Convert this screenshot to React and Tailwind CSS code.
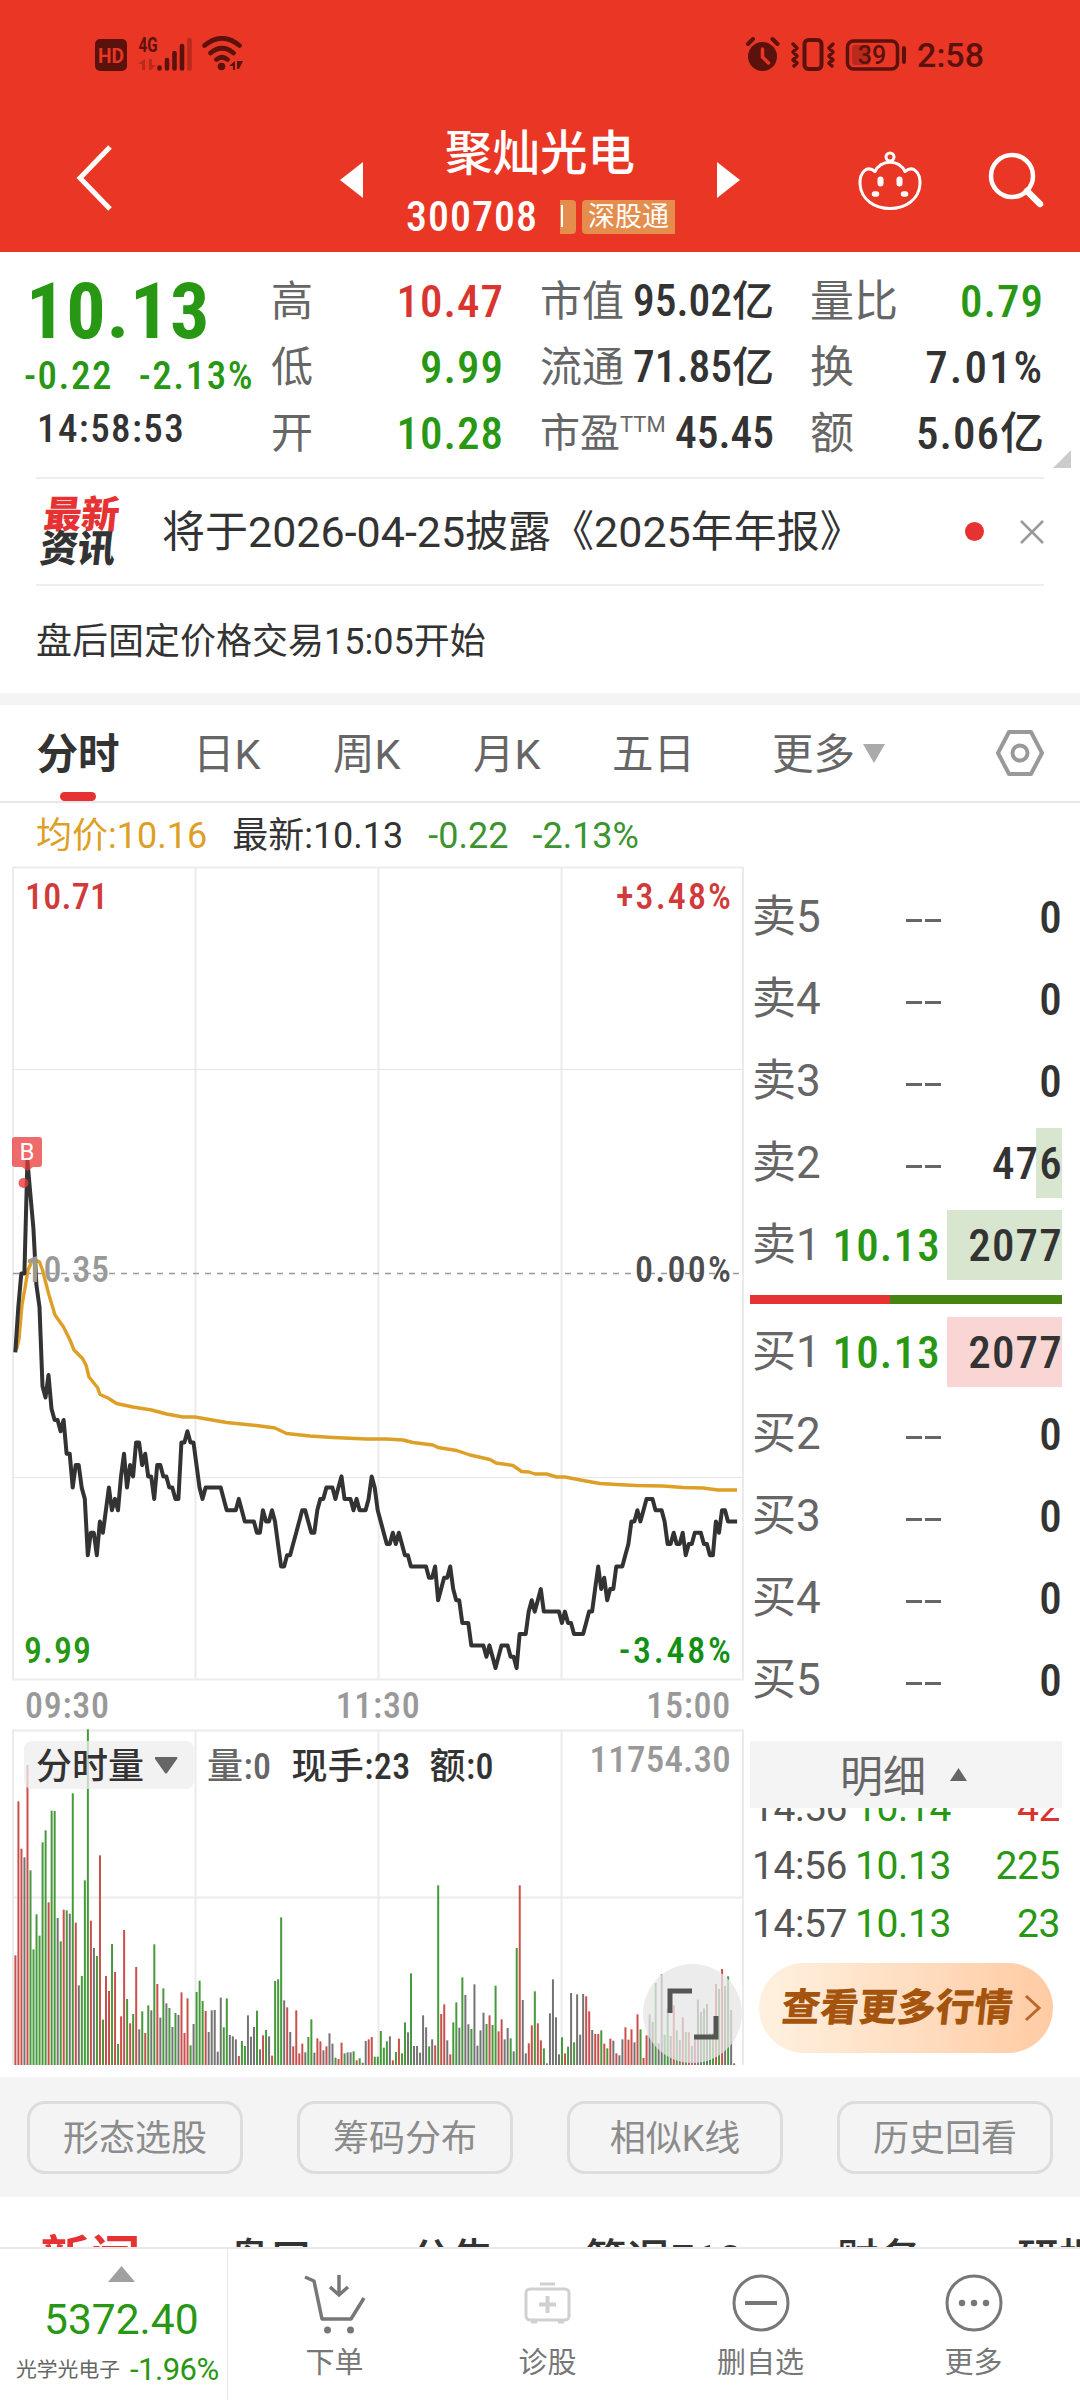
import { Fragment } from 'react'

const UP = 'text-[#d9342f]'
const DOWN = 'text-[#289714]'
const DARK = 'text-[#333333]'

// minute closes, in cents away from yesterday's 10.35
const PRECIOS = [
  -7, -3, 0, 0, 10, 7, 4, -1, -3, -10, -11, -9, -12, -13, -13, -14, -13, -16, -16, -19,
  -17, -17, -19, -20, -25, -23, -23, -25, -22, -23, -21, -19, -21, -20, -21, -18, -16, -19, -17, -18,
  -15, -15, -17, -16, -18, -18, -20, -17, -17, -18, -18, -19, -19, -20, -20, -15, -15, -14, -15, -15,
  -17, -19, -20, -19, -19, -19, -19, -19, -19, -20, -21, -21, -21, -21, -20, -21, -22, -22, -22, -22,
  -23, -23, -21, -22, -22, -21, -22, -24, -26, -26, -25, -25, -24, -23, -22, -21, -21, -22, -23, -23,
  -21, -20, -20, -19, -19, -19, -20, -19, -18, -20, -20, -20, -21, -20, -21, -21, -21, -20, -18, -19,
  -21, -22, -23, -24, -24, -23, -24, -23, -24, -25, -25, -26, -26, -26, -26, -26, -26, -27, -27, -26,
  -29, -28, -27, -27, -26, -28, -29, -29, -31, -31, -31, -33, -33, -33, -33, -33, -34, -33, -34, -35,
  -34, -33, -33, -33, -34, -34, -35, -32, -32, -32, -30, -29, -30, -29, -28, -30, -30, -30, -30, -30,
  -30, -31, -30, -31, -31, -32, -32, -32, -32, -31, -30, -30, -28, -26, -28, -27, -29, -28, -28, -26,
  -26, -26, -25, -24, -22, -22, -21, -22, -21, -20, -20, -20, -21, -21, -21, -22, -24, -24, -23, -24,
  -24, -23, -25, -24, -24, -23, -23, -23, -24, -24, -25, -25, -22, -23, -21, -21, -22, -22, -22, -22,
]

const MEDIA =
  '15,484 17,482 19,473 22,439 25,422 28,404 32,395 35,393.5 39.5,396 42.5,404 48.7,428 55,449 63.5,461 69.5,473 74,484 82.5,492.5 86,499 89,511 97.5,521.5 100,528.5 108,532 116.5,537.5 133,541 151.5,544 166.5,548 183,551 195,551 226.5,556.5 256.5,559.5 275,562 286.5,567.5 310,570 333,571.5 366.5,573 386,573 403,574 413,576.5 433,579 438,581.5 456.6,584.5 470,589 490,593.5 496,597 513,599.5 521.6,605.5 529,606 535,608 546.6,608 556.6,611 565,611 583,614.5 600,617.5 616.6,618.5 636.6,619.5 663,620 683,621.5 703,622 718,624 737,624'

// one bar per minute: colour + distance from the top of the panel (thirds of a px)
const VOLUMEN = `r766 r304 r446 k472 r195 g511 g748 g643 g707 g427 g391 r607 g332 g333 k654 g724 r629 g631 k641 g280
r668 k856 g828 g541 g88 r662 k744 g768 r466 g959 r828 r873 g732 r816 g1032 r949 r690 g897 r970 g942
r801 k988 g934 r999 g916 k931 g733 r852 k953 g865 k910 g924 k981 g939 k945 r877 r999 r895 g1036 k972
g876 g842 g903 r933 k996 k931 k930 k1055 k893 g982 g895 k1005 k1009 k1018 r1068 g1023 g1038 k946 k1010 k981
g932 k1048 r1006 g990 k1009 r1067 g843 g838 g652 k901 r922 k996 r1039 r931 r1060 r1031 k1057 g1011 g958 k1058
r1015 r1024 k1051 r1039 k1000 k1031 g1073 r1077 r1028 g1060 k1057 k1057 g1054 r1081 g1075 k1088 k1023 r1018 r1011 g1070
g1070 g993 g1043 g1024 k1009 r1081 g1056 r1016 g1060 g967 k997 g820 k1038 k1038 k1058 k946 k982 g1039 k1018 r1036
g556 r942 r913 k1021 r1063 g967 g907 k983 g832 k885 k973 g987 k853 k1037 k991 k938 g972 r946 g975 g857
r994 r958 k1018 k984 g1015 k1054 g744 r556 k900 k1060 r1030 r976 g874 r970 r1021 g1045 k1090 k940 k838 k952
k1063 g1012 r1060 g1040 k879 g1027 k883 k1004 k882 r889 r934 k990 r1002 r1002 g991 r1031 g1045 r1016 k1022 r1060
k1066 k1018 r982 r1019 r988 k1027 r943 g988 r1074 r1006 k943 k966 g849 k1030 k823 g1004 g925 k1008 r916 g991
k1020 r952 g996 r997 k1038 r1018 k899 k936 g925 k912 g1000 g1000 r852 g867 r807 k858 g829 k930 k1090`.split(/\s+/)

const BAR_COLORS = { r: '#c9504c', g: '#479a3c', k: '#747474' }

const VENTAS = [
  { label: '卖5', price: '--', vol: '0', w: 0 },
  { label: '卖4', price: '--', vol: '0', w: 0 },
  { label: '卖3', price: '--', vol: '0', w: 0 },
  { label: '卖2', price: '--', vol: '476', w: 26 },
  { label: '卖1', price: '10.13', vol: '2077', w: 115 },
]

const COMPRAS = [
  { label: '买1', price: '10.13', vol: '2077', w: 115 },
  { label: '买2', price: '--', vol: '0', w: 0 },
  { label: '买3', price: '--', vol: '0', w: 0 },
  { label: '买4', price: '--', vol: '0', w: 0 },
  { label: '买5', price: '--', vol: '0', w: 0 },
]

const TICKS = [
  { time: '14:56', price: '10.14', vol: '42', color: UP },
  { time: '14:56', price: '10.13', vol: '225', color: DOWN },
  { time: '14:57', price: '10.13', vol: '23', color: DOWN },
]

function StatusBar() {
  return (
    <div className="flex h-[108px] items-start justify-between pl-[95px] pr-[96px] pt-[36px] text-[#5c120c]">
      <svg width="150" height="36" viewBox="0 0 150 36" fill="none">
        <rect x="0" y="3" width="32" height="32" rx="5" fill="#5c120c" />
        <text x="16" y="26.5" textAnchor="middle" fontSize="20" fontWeight="700" fill="#e93625" textLength="26" lengthAdjust="spacingAndGlyphs" className="font-['Roboto']">HD</text>
        <text x="43.5" y="16" fontSize="20" fontWeight="700" fill="#5c120c" textLength="19" lengthAdjust="spacingAndGlyphs" className="font-['Roboto']">4G</text>
        <path d="M50 23v11h-3v-6h-4zM54 23v11h2l5-5h-4v-6z" fill="#b92a1c" />
        <path d="M64.500 31.500v1M72 24v8.500M79.500 17v15.500M87 10v22.500" stroke="#5c120c" strokeWidth="4.600" strokeLinecap="round" />
        <path d="M94.500 4v28.500" stroke="#b92a1c" strokeWidth="4.600" strokeLinecap="round" />
        <path d="M109.500 9.500Q127 -5 144.500 9.500M115.500 17Q127 7.500 138.500 17M121.500 23.500Q127 19 132.500 23.500" stroke="#5c120c" strokeWidth="4.600" strokeLinecap="round" />
        <circle cx="126.500" cy="30.500" r="3.800" fill="#5c120c" />
        <path d="M140 25v9h-2v-4h-4zM142 25h6l-4 8h-2z" fill="#5c120c" />
      </svg>
      <div className="flex items-start">
        <svg width="162" height="36" viewBox="0 0 162 36" fill="none" stroke="#5c120c">
          <circle cx="17.500" cy="20.500" r="14.500" fill="#5c120c" stroke="none" />
          <path d="M3 8l5-5M27.500 3l5 5" strokeWidth="4" strokeLinecap="round" />
          <path d="M17.500 13v8l6 6" stroke="#e93625" strokeWidth="3.500" strokeLinecap="round" />
          <rect x="59.500" y="4" width="17" height="29" rx="4" strokeWidth="4" />
          <path d="M48 8l4 4-4 4 4 4-4 4 4 3-3 3M88 8l-4 4 4 4-4 4 4 4-4 3 3 3" strokeWidth="3.500" strokeLinecap="round" strokeLinejoin="round" />
          <rect x="102.500" y="5" width="50" height="28" rx="6" strokeWidth="3.500" />
          <rect x="107" y="9" width="18" height="20" rx="3" fill="#b92a1c" stroke="none" />
          <path d="M159 12v14" strokeWidth="4" strokeLinecap="round" />
          <text x="127" y="27.500" textAnchor="middle" fontSize="25" stroke="none" fill="#5c120c" className="font-['Roboto'] font-medium">39</text>
        </svg>
        <span className="ml-[10px] mt-[1px] text-[34px] font-medium leading-[37px]">2:58</span>
      </div>
    </div>
  )
}

function Header() {
  return (
    <header className="h-[252px] bg-[#e93625] text-white">
      <StatusBar />
      <div className="flex h-[144px] items-start">
        <svg className="ml-[74px] mt-[36px]" width="42" height="68" viewBox="0 0 42 68" fill="none" stroke="#fff" strokeWidth="5">
          <path d="M36 3L6 34l30 31" />
        </svg>
        <svg className="ml-[224px] mt-[54px]" width="23" height="36" viewBox="0 0 23 36"><path d="M23 0v36L0 18z" fill="#fff" /></svg>
        <div className="flex w-[354px] flex-col items-center">
          <h1 className="mt-[19px] text-[47.500px] font-medium leading-[54px]">聚灿光电</h1>
          <div className="mt-[13px] flex w-full items-center pl-[43px]">
            <span className="w-[134px] text-[42px] font-medium leading-[46px] tracking-[1px] [font-stretch:85%]">300708</span>
            <span className="ml-[20px] flex h-[34px] w-[16px] items-center rounded-r bg-[#e48d4c] text-[24px] leading-none">
              <span className="mt-[-2px] h-[22px] w-[3px] border-r-2 border-white" />
            </span>
            <span className="ml-[6px] flex h-[34px] w-[93px] items-center justify-center rounded-l bg-[#e48d4c] text-[27px] leading-[34px]">深股通</span>
          </div>
        </div>
        <svg className="mt-[54px]" width="23" height="36" viewBox="0 0 23 36"><path d="M0 0v36l23-18z" fill="#fff" /></svg>
        <svg className="ml-[117px] mt-[42px]" width="66" height="62" viewBox="0 0 66 62" fill="none" stroke="#fff" strokeWidth="3">
          <circle cx="33" cy="7" r="4" />
          <path d="M18 21.500C24 9 42 9 48 21.500C56 15 63.500 22 63 34C62 50 48 58.500 33 58.500S4 50 3 34C2.500 22 10 15 18 21.500z" strokeLinejoin="round" />
          <path d="M23.500 29.500v4M42.500 29.500v4" strokeWidth="6" strokeLinecap="round" />
          <path d="M17.500 44h2M46.500 44h2" strokeWidth="5.500" strokeLinecap="round" />
        </svg>
        <svg className="ml-[65px] mt-[44px]" width="58" height="58" viewBox="0 0 58 58" fill="none" stroke="#fff">
          <circle cx="24" cy="24" r="21" strokeWidth="4.500" />
          <path d="M39 39l13 13" strokeWidth="6.500" strokeLinecap="round" />
        </svg>
      </div>
    </header>
  )
}

const NUM = 'text-[45px] font-medium tracking-[1px] [font-stretch:85%] mr-[-1px]'
const NUM_SM = 'text-[43.500px] font-medium [font-stretch:85%]'

function Quote() {
  return (
    <section className="relative flex h-[225px] pt-[17px] text-[42px] leading-[66px] text-[#666666]">
      <div className={`w-[271px] ${DOWN}`}>
        <div className="mt-[7px] pl-[26px] text-[78px] font-bold leading-[72px] tracking-[0.800px] [font-stretch:85%]">10.13</div>
        <div className="flex h-[55px] justify-between pl-[24px] pr-[18px] text-[39px] font-medium leading-[57px] tracking-[1.500px] [font-stretch:85%]">
          <span>-0.22</span><span className="mr-[-1px]">-2.13%</span>
        </div>
        <div className={`mt-[2px] pl-[37px] text-[39px] leading-[49px] tracking-[1.400px] font-medium [font-stretch:85%] ${DARK}`}>14:58:53</div>
      </div>
      <div className="w-[232px]">
        <div className="flex justify-between"><span>高</span><span className={`${NUM} ${UP}`}>10.47</span></div>
        <div className="flex justify-between"><span>低</span><span className={`${NUM} ${DOWN}`}>9.99</span></div>
        <div className="flex justify-between"><span>开</span><span className={`${NUM} ${DOWN}`}>10.28</span></div>
      </div>
      <div className="ml-[37px] w-[234px]">
        <div className="flex justify-between"><span>市值</span><span className={`${NUM_SM} ${DARK}`}>95.02<span className="text-[42px]">亿</span></span></div>
        <div className="flex justify-between"><span>流通</span><span className={`${NUM_SM} ${DARK}`}>71.85<span className="text-[42px]">亿</span></span></div>
        <div className="flex justify-between">
          <span className="flex text-[40px]">市盈<span className="mt-[-9px] text-[22px]">TTM</span></span>
          <span className={`${NUM_SM} ${DARK}`}>45.45</span>
        </div>
      </div>
      <div className="ml-[36px] w-[233px]">
        <div className="flex justify-between"><span className="text-[44px]">量比</span><span className={`${NUM} ${DOWN}`}>0.79</span></div>
        <div className="flex justify-between"><span className="text-[44px]">换</span><span className={`${NUM} tracking-[2px] ${DARK}`}>7.01%</span></div>
        <div className="flex justify-between"><span className="text-[44px]">额</span><span className={`${NUM} ${DARK}`}>5.06<span className="text-[44px] tracking-normal">亿</span></span></div>
      </div>
      <svg className="absolute right-[9px] top-[198px]" width="18" height="18" viewBox="0 0 18 18"><path d="M18 0v18H0z" fill="#cccccc" /></svg>
    </section>
  )
}

function News() {
  return (
    <section className="mx-[36px]">
      <div className="flex h-[109px] items-center border-y-2 border-[#eeeeee]">
        <div className="ml-[6px] w-[79px] -skew-x-6 text-[38px] font-black leading-[34px] tracking-[-0.500px]">
          <div className="text-[#e63232]">最新</div>
          <div className={DARK}>资讯</div>
        </div>
        <span className={`ml-[41px] flex-1 pt-[2px] text-[43px] leading-none ${DARK}`}>将于2026-04-25披露《2025年年报》</span>
        <span className="size-[19px] rounded-full bg-[#e63232]" />
        <svg className="ml-[36px]" width="24" height="24" viewBox="0 0 24 24" stroke="#999" strokeWidth="2.500"><path d="M1 1l22 22M23 1L1 23" /></svg>
      </div>
      <div className={`flex h-[107px] items-center pt-[4px] text-[36px] ${DARK}`}>盘后固定价格交易15:05开始</div>
    </section>
  )
}

function Tabs() {
  return (
    <nav className="flex h-[98px] items-start border-b-2 border-[#e8e8e8] pt-[17px] text-[41.500px] leading-[66px] text-[#666666]">
      <div className={`ml-[36px] flex w-[84px] flex-col items-center font-bold ${DARK}`}>
        分时
        <span className="mt-[4px] h-[9px] w-[36px] rounded-full bg-[#e63232]" />
      </div>
      <span className="ml-[73px] w-[140px]">日K</span>
      <span className="w-[140px]">周K</span>
      <span className="w-[139px]">月K</span>
      <span className="w-[160px]">五日</span>
      <span className="w-[90px]">更多</span>
      <svg className="mt-[22px]" width="24" height="19" viewBox="0 0 24 19"><path d="M1 0h22L12 19z" fill="#aaaaaa" /></svg>
      <svg className="ml-[109px] mt-[7px]" width="50" height="48" viewBox="0 0 50 48" fill="none" stroke="#999999" strokeWidth="4">
        <path d="M14 3h22l11 21-11 21H14L3 24z" strokeLinejoin="round" />
        <circle cx="25" cy="24" r="7.500" />
      </svg>
    </nav>
  )
}

const LABEL = "font-['Roboto'] font-medium [font-stretch:85%]"

function PriceChart() {
  const line = PRECIOS.map((c, i) => `${(15.3 + i * 3.02).toFixed(1)},${(407.5 - c * 11.27).toFixed(1)}`).join(' ')
  return (
    <svg width="746" height="815" viewBox="0 0 746 815" fill="none">
      <path d="M13 1.500h730v812H13zM195.500 1v813M378.500 1v813M561.500 1v813" stroke="#ebebeb" strokeWidth="2" />
      <path d="M13 203.500h730M13 611.500h730" stroke="#e6e6e6" />
      <path d="M13 407.500h730" stroke="#999999" strokeWidth="1.500" strokeDasharray="6 6" />
      <polyline points={MEDIA} stroke="#dd9f26" strokeWidth="3.400" strokeLinejoin="round" />
      <polyline points={line} stroke="#333333" strokeWidth="4" strokeLinejoin="round" />
      <g fontSize="36" className={LABEL}>
        <text x="25" y="42.500" fill="#d1393a" textLength="83">10.71</text>
        <text x="731" y="42.500" fill="#d1393a" textAnchor="end" textLength="115">+3.48%</text>
        <text x="25" y="415.500" fill="#999999" textLength="84">10.35</text>
        <text x="731" y="415.500" fill="#4d4d4d" textAnchor="end" textLength="96">0.00%</text>
        <text x="24" y="796.500" fill="#289714" textLength="67">9.99</text>
        <text x="731" y="796.500" fill="#119014" textAnchor="end" textLength="112">-3.48%</text>
      </g>
      <path d="M15 271h24a3 3 0 0 1 3 3v24a3 3 0 0 1-3 3h-6l-5.500 4-5.500-4h-7a3 3 0 0 1-3-3v-24a3 3 0 0 1 3-3z" fill="#ea3a3a" fillOpacity=".75" />
      <text x="27" y="294" textAnchor="middle" fontSize="24" fill="#fff" className="font-['Roboto']">B</text>
      <circle cx="23.500" cy="317" r="5" fill="#ea3a3a" fillOpacity=".8" />
    </svg>
  )
}

function VolumeChart() {
  return (
    <div className="relative h-[348px]">
      <svg width="746" height="340" viewBox="0 0 746 340" fill="none">
        <path d="M13 336V1.500h730V336M13 168.500h730M195.500 2v334M378.500 2v334M561.500 2v334" stroke="#ebebeb" strokeWidth="2" />
        {VOLUMEN.map((v, i) => {
          const top = v.slice(1) / 3 - 29
          return <rect key={i} x={14.4 + i * 3.02} y={top} width="2" height={336 - top} fill={BAR_COLORS[v[0]]} />
        })}
      </svg>
      <div className={`absolute left-[24px] right-[15px] top-[12px] flex h-[48px] items-center text-[36px] font-medium tracking-[0.400px] [font-stretch:85%] ${DARK}`}>
        <div className="flex h-[48px] w-[170px] items-center gap-[10px] rounded-lg bg-[#eeeeee]/75 pl-[12px] pt-[3px] tracking-normal">
          分时量
          <svg className="mb-[3px]" width="24" height="17" viewBox="0 0 24 17"><path d="M1 0h22q1 1 0 2L13 16q-1 1-2 0L1 2z" fill="#666" /></svg>
        </div>
        <span className="ml-[13px] pt-[3px] text-[#666666]">量:0</span>
        <span className="ml-[20px] pt-[3px]">现手:23</span>
        <span className="ml-[19px] pt-[3px]">额:0</span>
        <span className="ml-auto mt-[-10px] text-[37px] tracking-[0.200px] text-[#999999]">11754.30</span>
      </div>
      <div className="absolute left-[643px] top-[235px] flex size-[99px] items-center justify-center rounded-full bg-[#e6e6e6]/75">
        <svg width="52" height="52" viewBox="0 0 52 52" fill="none" stroke="#555" strokeWidth="5"><path d="M3 25V3h22M49 28v21H27" /></svg>
      </div>
    </div>
  )
}

function BookRow({ row, bg }) {
  return (
    <div className="flex h-[82px] items-center text-[44px] leading-none text-[#666666]">
      <span className="ml-[2px] w-[76px]">{row.label}</span>
      <span className={`w-[113px] text-right text-[45px] tracking-[1.200px] [font-stretch:85%] ${row.price === '--' ? '' : 'font-medium ' + DOWN}`}>
        {row.price === '--' ? <span className="inline-flex gap-[3px] align-middle"><i className="h-[3px] w-[16px] bg-[#666]" /><i className="h-[3px] w-[16px] bg-[#666]" /></span> : row.price}
      </span>
      <div className="flex h-[70px] flex-1 justify-end">
        <div className={`flex h-full items-center justify-end ${bg}`} style={{ width: row.w }}>
          <span className={`mr-[-1px] text-[45px] font-medium tracking-[1.200px] [font-stretch:85%] ${DARK}`}>{row.vol}</span>
        </div>
      </div>
    </div>
  )
}

function OrderBook() {
  return (
    <aside className="ml-[4px] w-[312px] pt-[10px]">
      {VENTAS.map(r => <BookRow key={r.label} row={r} bg="bg-[#d9e6cf]" />)}
      <div className="mb-[7px] mt-[9px] flex h-[9px]">
        <span className="w-[140px] bg-[#e63232]" />
        <span className="flex-1 bg-[#44840f]" />
      </div>
      {COMPRAS.map(r => <BookRow key={r.label} row={r} bg="bg-[#f9d6d4]" />)}

      <div className="mt-[20px] flex h-[67px] items-center bg-[#f4f4f4] pl-[90px] pt-[5px] text-[43px] text-[#666666]">
        明细
        <svg className="mb-[5px] ml-[24px]" width="17" height="13" viewBox="0 0 17 13"><path d="M8.500 0L17 13H0z" fill="#666" /></svg>
      </div>
      <div className="flex h-[145px] flex-col justify-end overflow-hidden pl-[2px] pr-[2px] text-[39px] leading-[58px] tracking-[-0.400px]">
        {TICKS.map((t, i) => (
          <div key={i} className="flex shrink-0">
            <span className="w-[103px] text-[#555555]">{t.time}</span>
            <span className={DOWN}>{t.price}</span>
            <span className={`ml-auto ${t.color}`}>{t.vol}</span>
          </div>
        ))}
      </div>
      <button className="ml-[9px] mt-[10px] flex h-[90px] w-[294px] items-center rounded-full bg-gradient-to-r from-[#fff1e0] to-[#ffcba3] pl-[23px] text-[#a5540d]">
        <span className="-skew-x-6 whitespace-nowrap text-[38.500px] font-black">查看更多行情</span>
        <svg className="ml-[11px]" width="18" height="28" viewBox="0 0 18 28" fill="none" stroke="#b9682a" strokeWidth="3"><path d="M2 2l13 12L2 26" /></svg>
      </button>
    </aside>
  )
}

function BottomBar() {
  const items = [
    ['下单', (
      <g key="a" strokeWidth="3.500">
        <path d="M1 3l9 4 8 38h29l13-21" strokeLinejoin="round" />
        <path d="M35 1v19M26 13l9 8 9-8" />
        <circle cx="23.500" cy="56" r="3.500" fill="#777" stroke="none" /><circle cx="46.500" cy="56" r="3.500" fill="#777" stroke="none" />
      </g>
    )],
    ['诊股', (
      <g key="b" stroke="#d0d0d0" strokeWidth="3">
        <rect x="9" y="15" width="43" height="31" rx="4" />
        <path d="M23 10h15M14 48h6M41 48h6" />
        <path d="M30.500 22v17M22 30.500h17" strokeWidth="4" />
      </g>
    )],
    ['删自选', (
      <g key="c" strokeWidth="3">
        <circle cx="31" cy="29" r="27" /><path d="M15 29h32" strokeWidth="4" />
      </g>
    )],
    ['更多', (
      <g key="d" strokeWidth="3">
        <circle cx="31" cy="29" r="27" />
        <g fill="#777" stroke="none"><circle cx="19" cy="29" r="3.200" /><circle cx="31" cy="29" r="3.200" /><circle cx="43" cy="29" r="3.200" /></g>
      </g>
    )],
  ]
  return (
    <footer className="flex h-[153px] border-t-2 border-[#e8e8e8] bg-white">
      <div className={`flex w-[228px] flex-col border-r border-[#e8e8e8] ${DOWN}`}>
        <svg className="ml-[108px] mt-[17px]" width="27" height="16" viewBox="0 0 27 16"><path d="M13.500 0L27 16H0z" fill="#a0a0a0" /></svg>
        <span className="mt-[15px] pl-[44px] text-[42.500px] leading-[46px]">5372.40</span>
        <div className="mt-[9px] flex items-center pl-[16px] leading-[36px]">
          <span className="w-[114px] text-[20.800px] text-[#666666]">光学光电子</span>
          <span className="text-[31px] tracking-[-0.500px]">-1.96%</span>
        </div>
      </div>
      {items.map(([label, icon]) => (
        <div key={label} className="flex w-[213px] flex-col items-center pt-[25px] text-[29px] leading-[38px] text-[#777777]">
          <svg width="62" height="60" viewBox="0 0 62 60" fill="none" stroke="#777777">{icon}</svg>
          <span className="mt-[10px]">{label}</span>
        </div>
      ))}
    </footer>
  )
}

export default function App() {
  return (
    <main className="flex h-[2400px] w-[1080px] flex-col overflow-hidden bg-white font-['Roboto','Noto_Sans_CJK_SC',sans-serif]">
      <Header />
      <Quote />
      <News />
      <div className="h-[12px] bg-[#f4f4f4]" />
      <Tabs />
      <div className={`flex h-[63px] items-center pl-[36px] pt-[2px] text-[36px] ${DARK}`}>
        <span className="text-[#dd9f26]">均价:10.16</span>
        <span className="ml-[25px]">最新:10.13</span>
        <span className="ml-[25px] text-[#3c9430]">-0.22</span>
        <span className="ml-[24px] text-[#3c9430]">-2.13%</span>
      </div>

      <div className="flex h-[1211px] shrink-0">
        <div className="w-[746px]">
          <PriceChart />
          <div className="flex h-[48px] items-center justify-between pl-[25px] pr-[15px] pt-[2px] text-[36px] font-medium leading-[48px] tracking-[0.700px] text-[#999999] [font-stretch:85%]">
            {['09:30', '11:30', '15:00'].map(t => <Fragment key={t}><span>{t}</span></Fragment>)}
          </div>
          <VolumeChart />
        </div>
        <OrderBook />
      </div>

      <div className="flex h-[120px] shrink-0 items-center justify-between bg-[#f4f4f4] px-[27px]">
        {['形态选股', '筹码分布', '相似K线', '历史回看'].map(t => (
          <button key={t} className="h-[73px] w-[216px] rounded-[18px] border-3 border-[#dddddd] pt-[4px] text-[36px] text-[#8c8c8c]">{t}</button>
        ))}
      </div>

      <div className={`flex h-[50px] shrink-0 items-start overflow-hidden whitespace-nowrap pl-[40px] text-[42px] font-medium leading-[62px] ${DARK}`}>
        <span className="w-[188px] shrink-0 pt-[32px] text-[50px] font-bold text-[#e63232]">新闻</span>
        <span className="w-[182px] shrink-0 pt-[32px]">盘口</span>
        <span className="w-[174px] shrink-0 pt-[32px]">公告</span>
        <span className="w-[253px] shrink-0 pt-[32px] text-[43px]">简况F10</span>
        <span className="w-[180px] shrink-0 pt-[32px]">财务</span>
        <span className="shrink-0 pt-[32px]">研报</span>
      </div>
      <BottomBar />
    </main>
  )
}
